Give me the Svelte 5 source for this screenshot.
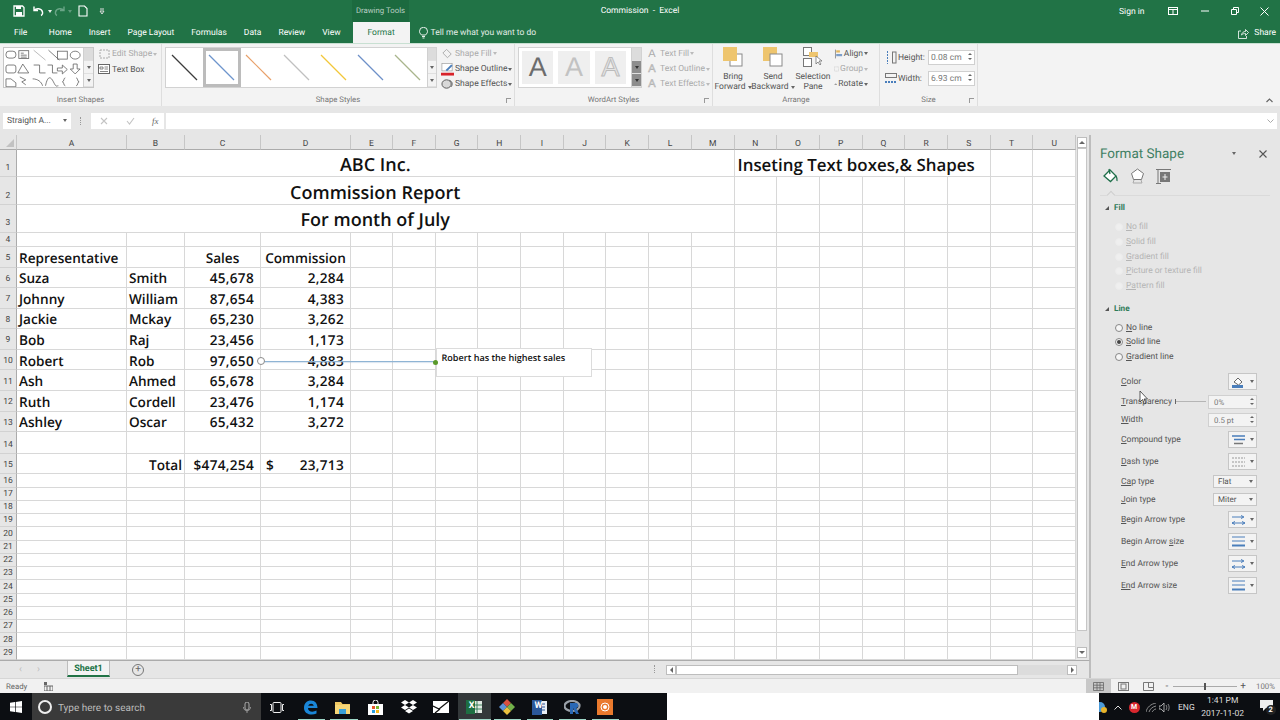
<script lang="ts">
  const tabs = ["Home", "Insert", "Page Layout", "Formulas", "Data", "Review", "View"];
  const colNames = "ABCDEFGHIJKLMNOPQRSTU".split("");

  const sheetData: Record<number, Record<string, string>> = {
    5: { A: "Representative", C: "Sales", D: "Commission" },
    6: { A: "Suza", B: "Smith", C: "45,678", D: "2,284" },
    7: { A: "Johnny", B: "William", C: "87,654", D: "4,383" },
    8: { A: "Jackie", B: "Mckay", C: "65,230", D: "3,262" },
    9: { A: "Bob", B: "Raj", C: "23,456", D: "1,173" },
    10: { A: "Robert", B: "Rob", C: "97,650", D: "4,883" },
    11: { A: "Ash", B: "Ahmed", C: "65,678", D: "3,284" },
    12: { A: "Ruth", B: "Cordell", C: "23,476", D: "1,174" },
    13: { A: "Ashley", B: "Oscar", C: "65,432", D: "3,272" },
    15: { B: "Total", C: "$474,254", D: "23,713" }
  };
  const titles: Record<number, string> = { 1: "ABC Inc.", 2: "Commission Report", 3: "For month of July" };
  const rowNums = Array.from({ length: 29 }, (_, i) => i + 1);

  function align(row: number, col: string): string {
    if (row === 5 && col !== "A") return "center";
    if (col === "C" || col === "D") return "num";
    if (row === 15 && col === "B") return "total";
    return "";
  }

  const fillOptions = [
    ["N", "o fill"],
    ["S", "olid fill"],
    ["G", "radient fill"],
    ["P", "icture or texture fill"],
    ["Pa", "ttern fill"]
  ];
  const lineOptions = [
    ["N", "o line", false],
    ["S", "olid line", true],
    ["G", "radient line", false]
  ];
  const lineRows = [
    { k: "C", label: "olor", h: "h20", ctl: "color" },
    { k: "T", label: "ransparency", h: "h20", ctl: "spin", value: "0%", slider: true },
    { k: "W", label: "idth", h: "h16", ctl: "spin", value: "0.5 pt" },
    { k: "C", label: "ompound type", h: "h24", ctl: "compound" },
    { k: "D", label: "ash type", h: "h20", ctl: "dash" },
    { k: "Ca", label: "p type", h: "h20", ctl: "select", value: "Flat" },
    { k: "J", label: "oin type", h: "h16", ctl: "select", value: "Miter" },
    { k: "B", label: "egin Arrow type", h: "h24", ctl: "arrow" },
    { k: "Begin Arrow s", label: "ize", h: "h20", ctl: "size" },
    { k: "E", label: "nd Arrow type", h: "h24", ctl: "arrow" },
    { k: "En", label: "d Arrow size", h: "h20", ctl: "size" }
  ];
  const styleLines = ["#3c3c3c", "#6d95cc", "#e8a06a", "#c0c0c0", "#f2c73a", "#6d90c8", "#a9b58c"];
  const underlines = [
    { left: 298, w: 27 }, { left: 330, w: 28 }, { left: 459, w: 32 }, { left: 494, w: 27 },
    { left: 527, w: 26 }, { left: 559, w: 27 }, { left: 592, w: 27 }
  ];
</script>

<div class="app">
  <header class="titlebar">
    <div class="qat">
      <svg width="12" height="12" viewBox="0 0 12 12"><path d="M1 1h8.500L11 2.500V11H1z" fill="none" stroke="#fff" stroke-width="1.300"/><rect x="3" y="1" width="5" height="3" fill="#fff"/><rect x="3" y="7" width="6" height="4" fill="#fff"/></svg>
      <svg class="q-undo" width="12" height="12" viewBox="0 0 12 12"><path d="M2 1.500v4h4M2.300 5.300C4 3 9.500 3 10.500 7c.3 1.500-.5 3-1.500 3.500" fill="none" stroke="#fff" stroke-width="1.400"/></svg>
      <span class="caret white q-c1"></span>
      <svg class="q-redo" width="12" height="12" viewBox="0 0 12 12"><path d="M10 1.500v4H6M9.700 5.300C8 3 2.500 3 1.500 7c-.3 1.500.5 3 1.500 3.500" fill="none" stroke="#6aa587" stroke-width="1.400"/></svg>
      <span class="caret dim q-c2"></span>
      <svg class="q-new" width="10" height="12" viewBox="0 0 10 12"><path d="M1 1h5.500L9 3.500V11H1z" fill="none" stroke="#fff" stroke-width="1.100"/></svg>
      <svg class="q-more" width="6" height="7" viewBox="0 0 6 7"><path d="M1 1h4M1 3h4L3 6z" fill="none" stroke="#ddd" stroke-width="1"/></svg>
    </div>
    <div class="context-tab">Drawing Tools</div>
    <div class="doc-title">Commission&nbsp; -&nbsp; Excel</div>
    <div class="win-controls">
      <span class="signin">Sign in</span>
      <svg class="w-display" width="10" height="8" viewBox="0 0 10 8"><rect x=".5" y=".5" width="9" height="7" fill="none" stroke="#fff"/><path d="M.5 2.500h9M5 2.500v5" stroke="#fff"/></svg>
      <svg class="w-min" width="8" height="2" viewBox="0 0 8 2"><path d="M0 1h8" stroke="#fff"/></svg>
      <svg class="w-max" width="8" height="8" viewBox="0 0 8 8"><path d="M.5 2.500h5v5h-5zM2.500 2.500v-2h5v5h-2" fill="none" stroke="#fff"/></svg>
      <svg class="w-close" width="9" height="9" viewBox="0 0 9 9"><path d="M.5.500l8 8M8.500.500l-8 8" stroke="#fff"/></svg>
    </div>
  </header>

  <nav class="tabbar">
    <span class="tab file">File</span>
    {#each tabs as t}
      <span class="tab">{t}</span>
    {/each}
    <span class="tab active">Format</span>
    <svg class="bulb" width="9" height="12" viewBox="0 0 9 12"><path d="M2.500 8C1 6.500.5 5.500.5 4.300a4 4 0 0 1 8 0C8.500 5.500 8 6.500 6.500 8zM3 9.500h3M3.500 11h2" fill="none" stroke="#fff" stroke-width=".9"/></svg>
    <span class="tell">Tell me what you want to do</span>
    <span class="share">
      <svg width="11" height="11" viewBox="0 0 11 11"><path d="M3 3H.5v7.500h8V8M3.500 7c.5-2.500 2-3.500 4-3.500V1.500l3 3-3 3V5.500c-1.500 0-3 .3-4 1.500z" fill="none" stroke="#fff" stroke-width=".8"/></svg>
      Share
    </span>
  </nav>

  <section class="ribbon">
    <div class="group g-shapes">
      <div class="group-body">
        <div class="shape-gallery">
          <svg width="80" height="39" viewBox="0 0 80 39" fill="none" stroke="#5f5f5f" stroke-width=".8">
            <rect x="2" y="3" width="10" height="7" rx="3"/><rect x="15" y="2.500" width="10" height="8"/><path d="M17 5h3M17 7h6M17 9h6"/><path d="M30 2l12 10" stroke="#aaa"/><path d="M45 2l11 10" /><rect x="54" y="3" width="10" height="8"/><ellipse cx="72" cy="7" rx="5" ry="4"/>
            <rect x="2" y="17" width="10" height="8" rx="2"/><path d="M19 16l6 9H14z"/><path d="M30 17h6v8h6"/><path d="M44 17h5v8h5"/><path d="M54 20h5v-3l5 4.500-5 4.500v-3h-5z"/><path d="M70 16h4v5h3l-5 5-5-5h3z"/>
            <path d="M2 31h5l5 4v4H2z"/><path d="M16 29l6 3-4 2 4 3" /><path d="M29 31c5 0 9 3 10 7"/><path d="M42 38c2-10 5-10 8-4s3 4 5 4"/><path d="M62 30c-2 0-1 4-3 4 2 0 1 4 3 4"/><path d="M73 30c2 0 1 4 3 4-2 0-1 4-3 4"/>
          </svg>
          <div class="gallery-scroll">
            <span class="sc up disabled"></span><span class="sc"><span class="caret"></span></span><span class="sc"><span class="caret"></span></span>
          </div>
        </div>
        <div class="cmd-col compact">
          <div class="cmd off">
            <svg width="13" height="12" viewBox="0 0 13 12"><rect x="2" y="2" width="9" height="8" fill="none" stroke="#aaa" stroke-dasharray="2 1"/></svg>
            Edit Shape <span class="caret dimgrey"></span>
          </div>
          <div class="cmd">
            <svg width="13" height="11" viewBox="0 0 13 11"><rect x=".5" y=".5" width="11" height="9" fill="#fff" stroke="#666"/><path d="M2 3h3v2H2zM6.500 3H10M6.500 5H10M2 7.500h8" stroke="#666" fill="none" stroke-width=".8"/></svg>
            Text Box
          </div>
        </div>
      </div>
      <div class="group-label">Insert Shapes</div>
    </div>

    <div class="group g-styles">
      <div class="group-body">
        <div class="style-gallery">
          {#each styleLines as color, i}
            <div class="style-cell" class:selected={i === 1}>
              <svg width="28" height="27" viewBox="0 0 28 27"><path d="M1 1l25 25" stroke={color} stroke-width="1.200"/></svg>
            </div>
          {/each}
          <div class="gallery-scroll tall">
            <span class="sc disabled"></span><span class="sc"><span class="caret"></span></span><span class="sc"><span class="caret"></span></span>
          </div>
        </div>
        <div class="cmd-col">
          <div class="cmd off">
            <svg width="13" height="12" viewBox="0 0 14 12"><path d="M6 1l5 5-4 4-5-5z" fill="none" stroke="#aaa"/></svg>
            Shape Fill <span class="caret dimgrey"></span>
          </div>
          <div class="cmd">
            <svg width="13" height="13" viewBox="0 0 14 13"><rect x="1" y="0" width="11" height="8" fill="#fff" stroke="#999" stroke-width=".7"/><path d="M5 7l6-6 1.500 1.500-6 6z" fill="#4a7ebb"/><rect y="10" width="14" height="3" fill="#d8232a"/></svg>
            Shape Outline <span class="caret"></span>
          </div>
          <div class="cmd">
            <svg width="13" height="12" viewBox="0 0 14 12"><ellipse cx="6" cy="6" rx="5" ry="4.500" fill="#d8d8d8" stroke="#555"/><path d="M9 2c3 1 4 4 2 7" fill="none" stroke="#555"/></svg>
            Shape Effects <span class="caret"></span>
          </div>
        </div>
      </div>
      <div class="group-label">Shape Styles</div>
      <span class="launcher"></span>
    </div>

    <div class="group g-wordart">
      <div class="group-body">
        <div class="wa-gallery">
          <div class="wa-cell dark">A</div>
          <div class="wa-cell light">A</div>
          <div class="wa-cell outline">A</div>
          <div class="gallery-scroll wa">
            <span class="sc disabled"></span><span class="sc dark"><span class="caret"></span></span><span class="sc dark"><span class="caret"></span></span>
          </div>
        </div>
        <div class="cmd-col off-col">
          <div class="cmd off"><span class="wa-a">A</span> Text Fill <span class="caret dimgrey"></span></div>
          <div class="cmd off"><span class="wa-a o">A</span> Text Outline <span class="caret dimgrey"></span></div>
          <div class="cmd off"><span class="wa-a o">A</span> Text Effects <span class="caret dimgrey"></span></div>
        </div>
      </div>
      <div class="group-label">WordArt Styles</div>
      <span class="launcher"></span>
    </div>

    <div class="group g-arrange">
      <div class="group-body">
        <div class="big-cmd b1">
          <svg width="20" height="20" viewBox="0 0 20 20"><rect x="7" y="7" width="12" height="12" fill="#fff" stroke="#8a8a8a"/><rect x="0" y="0" width="14" height="14" fill="#eec56e"/></svg>
          <span>Bring<br/>Forward <i class="caret"></i></span>
        </div>
        <div class="big-cmd b2">
          <svg width="20" height="20" viewBox="0 0 20 20"><rect x="0" y="0" width="14" height="14" fill="#eec56e"/><rect x="7" y="7" width="12" height="12" fill="#fff" stroke="#8a8a8a"/></svg>
          <span>Send<br/>Backward <i class="caret"></i></span>
        </div>
        <div class="big-cmd b3">
          <svg width="20" height="20" viewBox="0 0 20 20"><rect x=".5" y=".5" width="8" height="8" fill="#fff" stroke="#777"/><rect x=".5" y="11.500" width="8" height="8" fill="#fff" stroke="#777"/><rect x="6" y="5" width="9" height="5" fill="#eec56e"/><path d="M13 9v8l2-2 2 3 1-1-2-3h3z" fill="#fff" stroke="#666" stroke-width=".7"/></svg>
          <span>Selection<br/>Pane</span>
        </div>
        <div class="cmd-col small">
          <div class="cmd"><svg width="12" height="12" viewBox="0 0 12 12"><path d="M2 0v12" stroke="#777"/><rect x="3" y="1" width="5" height="3" fill="#e5b75c"/><rect x="3" y="6" width="8" height="3" fill="#7c9ec9"/></svg> Align <span class="caret"></span></div>
          <div class="cmd off"><svg width="12" height="12" viewBox="0 0 12 12"><rect x="1" y="1" width="10" height="10" fill="none" stroke="#b5b5b5" stroke-dasharray="2 1"/></svg> Group <span class="caret dimgrey"></span></div>
          <div class="cmd"><svg width="12" height="12" viewBox="0 0 12 12"><path d="M1 10l5-7v7zM7 10V3l4 7z" fill="#7b7b7b"/></svg> Rotate <span class="caret"></span></div>
        </div>
      </div>
      <div class="group-label">Arrange</div>
    </div>

    <div class="group g-size">
      <div class="group-body size-body">
        <div class="size-row">
          <svg width="12" height="13" viewBox="0 0 12 13"><path d="M2.500 0v13" stroke="#4a7ebb" stroke-dasharray="2 1"/><rect x="7.500" y="1" width="3.500" height="11" fill="none" stroke="#777"/></svg>
          <span>Height:</span>
          <div class="spin-box wide">0.08 cm<span class="spin"><i></i><i class="d"></i></span></div>
        </div>
        <div class="size-row">
          <svg width="12" height="13" viewBox="0 0 12 13"><rect x=".5" y="1.500" width="11" height="4" fill="none" stroke="#777"/><path d="M0 10h12" stroke="#4a7ebb" stroke-dasharray="2 1" stroke-width="2"/></svg>
          <span>Width:</span>
          <div class="spin-box wide">6.93 cm<span class="spin"><i></i><i class="d"></i></span></div>
        </div>
      </div>
      <div class="group-label">Size</div>
      <span class="launcher"></span>
    </div>

    <svg class="collapse" width="7" height="5" viewBox="0 0 7 5"><path d="M.5 4l3-3 3 3" fill="none" stroke="#666" stroke-width="1.200"/></svg>
  </section>

  <section class="formula-bar">
    <div class="name-box">Straight A... <span class="caret"></span></div>
    <span class="grip"></span>
    <div class="fx-buttons">
      <svg width="8" height="8" viewBox="0 0 8 8"><path d="M1 1l6 6M7 1L1 7" stroke="#c4c4c4" stroke-width="1.100"/></svg>
      <svg width="9" height="8" viewBox="0 0 9 8"><path d="M1 4l2.500 3L8 1" fill="none" stroke="#c4c4c4" stroke-width="1.100"/></svg>
      <span class="fx">fx</span>
    </div>
    <div class="fx-input"><svg width="7" height="4" viewBox="0 0 7 4"><path d="M.5.500l3 3 3-3" fill="none" stroke="#aaa"/></svg></div>
  </section>

  <div class="workspace">
    <div class="sheet-area">
      <div class="sheet-row">
        <div class="grid">
          <div class="corner"><span></span></div>
          {#each colNames as c}
            <div class="col-head">{c}</div>
          {/each}

          {#each rowNums as r}
            <div class="row-head" class:tall={r <= 15 && r !== 4}>{r}</div>
            {#if titles[r]}
              <div class="cell title-cell">{titles[r]}</div>
              {#if r === 1}
                <div class="cell note-cell">Inseting Text boxes,&amp; Shapes</div>
                {#each colNames.slice(19) as c}<div class="cell"></div>{/each}
              {:else}
                {#each colNames.slice(13) as c}<div class="cell"></div>{/each}
              {/if}
            {:else}
              {#each colNames as c}
                <div class="cell data {align(r, c)}">
                  {#if r === 15 && c === "D"}
                    <span class="dollar">$</span>
                  {/if}
                  <span>{sheetData[r]?.[c] ?? ""}</span>
                </div>
              {/each}
            {/if}
          {/each}

          <!-- selected connector + text box float above the cells -->
          <div class="connector"></div>
          <span class="handle start"></span>
          <div class="textbox">Robert has the highest sales</div>
          <span class="handle end"></span>
        </div>

        <div class="vscroll">
          <span class="arrow-btn"><i class="tri up"></i></span>
          <span class="v-thumb"></span>
          <span class="arrow-btn"><i class="tri"></i></span>
        </div>
      </div>

      <div class="sheet-tabs">
        <span class="nav-l">‹</span><span class="nav-r">›</span>
        <span class="sheet-tab">Sheet1</span>
        <span class="add-sheet">+</span>
        <span class="grip h"></span>
        <div class="hscroll">
          <span class="arrow-btn"><i class="tri left"></i></span>
          <span class="h-thumb"></span>
          <span class="h-track"></span>
          <span class="arrow-btn"><i class="tri right"></i></span>
        </div>
      </div>
    </div>

    <aside class="pane">
      <div class="pane-head">
        <span class="pane-title">Format Shape</span>
        <span class="caret pane-caret"></span>
        <svg class="pane-close" width="8" height="8" viewBox="0 0 8 8"><path d="M.5.500l7 7M7.500.500l-7 7" stroke="#555" stroke-width="1.100"/></svg>
      </div>
      <div class="pane-icons">
        <svg width="16" height="16" viewBox="0 0 16 16"><path d="M1 8l6-6 6 6-5.500 5.500z" fill="#fff" stroke="#1f6f4a" stroke-width="1.300"/><path d="M6 1l1 5M13 8c1 1.500 1.500 3 1 5" fill="none" stroke="#1f6f4a" stroke-width="1.300"/></svg>
        <svg width="15" height="16" viewBox="0 0 15 16"><path d="M7.500 1l6 4.500-2 6h-8l-2-6z" fill="#fff" stroke="#777"/><path d="M4 12l-1 3h9l-1-3" fill="none" stroke="#aaa"/></svg>
        <svg width="15" height="15" viewBox="0 0 15 15"><path d="M0 .5h15M0 14.500h5" stroke="#777"/><path d="M2 1v13" stroke="#777"/><rect x="4" y="3" width="10" height="10" fill="#777"/><path d="M9 5v6M6.500 8h5" stroke="#eee"/></svg>
      </div>
      <div class="pane-rule"><span class="notch"></span></div>

      <div class="section-head first"><i class="expand"></i>Fill</div>
      <div class="options disabled">
        {#each fillOptions as [k, rest]}
          <div class="option"><span class="radio"></span><span><u>{k}</u>{rest}</span></div>
        {/each}
      </div>

      <div class="section-head line-head"><i class="expand"></i>Line</div>
      <div class="options line-options">
        {#each lineOptions as [k, rest, on]}
          <div class="option"><span class="radio" class:on></span><span><u>{k}</u>{rest}</span></div>
        {/each}
      </div>

      <div class="line-rows">
        {#each lineRows as row}
          <div class="line-row {row.h}">
            <span class="line-label">{#if row.k.length > 2}{row.k.slice(0, -1)}<u>{row.k.slice(-1)}</u>{:else}<u>{row.k}</u>{/if}{row.label}</span>
            {#if row.slider}
              <span class="slider"></span>
            {/if}
            {#if row.ctl === "spin"}
              <div class="spin-box">{row.value}<span class="spin"><i></i><i class="d"></i></span></div>
            {:else if row.ctl === "select"}
              <div class="select-box">{row.value}<span class="caret"></span></div>
            {:else}
              <div class="icon-box">
                {#if row.ctl === "color"}
                  <svg width="13" height="12" viewBox="0 0 13 12"><path d="M2 6l4-4 4 4-3.500 3z" fill="#fff" stroke="#666"/><rect y="9" width="11" height="3" fill="#4a7ebb"/></svg>
                {:else if row.ctl === "compound"}
                  <svg width="13" height="10" viewBox="0 0 13 10"><path d="M0 1h13M2 4.500h11" stroke="#4a7ebb" stroke-width="1.500"/><path d="M2 8.500h9" stroke="#777" stroke-width="1.500"/></svg>
                {:else if row.ctl === "dash"}
                  <svg width="13" height="10" viewBox="0 0 13 10"><path d="M0 1h13M0 5h13M0 9h13" stroke="#999" stroke-dasharray="2 1"/></svg>
                {:else if row.ctl === "arrow"}
                  <svg width="13" height="10" viewBox="0 0 13 10"><path d="M0 2h11M9 .5L12 2 9 3.500M0 8h13M3 6.500L0 8l3 1.500M10 6.500L13 8l-3 1.500" fill="none" stroke="#4a7ebb"/></svg>
                {:else}
                  <svg width="13" height="11" viewBox="0 0 13 11"><path d="M0 1h13M0 5h13" stroke="#4a7ebb"/><path d="M0 9.500h13" stroke="#4a7ebb" stroke-width="2"/></svg>
                {/if}
                <span class="caret"></span>
              </div>
            {/if}
          </div>
        {/each}
      </div>

      <svg class="cursor" width="10" height="15" viewBox="0 0 10 15"><path d="M1 1v11l2.500-2.500L5.500 14l1.500-.7-2-4.300h3.500z" fill="#fff" stroke="#333" stroke-width=".8"/></svg>
    </aside>
  </div>

  <footer class="statusbar">
    <span class="ready">Ready</span>
    <svg class="macro" width="9" height="9" viewBox="0 0 9 9"><rect x="0" y="4" width="9" height="5" fill="none" stroke="#666"/><path d="M3 4v5M6 4v5" stroke="#666"/><rect width="3" height="3" fill="#666"/></svg>
    <div class="views">
      <span class="view on"><svg width="11" height="9" viewBox="0 0 11 9"><path d="M.5.500h10v8H.5zM.5 3.200h10M.5 5.800h10M4 .5v8M7 .5v8" fill="none" stroke="#666" stroke-width=".8"/></svg></span>
      <span class="view"><svg width="11" height="9" viewBox="0 0 11 9"><rect x=".5" y=".5" width="10" height="8" fill="none" stroke="#777"/><rect x="3" y="2" width="5" height="5" fill="none" stroke="#777"/></svg></span>
      <span class="view"><svg width="11" height="9" viewBox="0 0 11 9"><path d="M.5.500h10v8H.5zM5.500.500v5h5" fill="none" stroke="#777"/></svg></span>
    </div>
    <div class="zoom">
      <span class="z-btn">-</span>
      <span class="z-track"><i></i></span>
      <span class="z-btn">+</span>
      <span class="z-val">100%</span>
    </div>
  </footer>

  <footer class="taskbar">
    <div class="start">
      <svg width="12" height="12" viewBox="0 0 12 12" fill="#fff"><path d="M0 1.700l5-.7v4.700H0zM5.700.9L12 0v5.700H5.700zM0 6.300h5V11l-5-.7zM5.700 6.300H12V12l-6.300-.9z"/></svg>
    </div>
    <div class="search">
      <span class="cortana"></span>
      <span class="search-text">Type here to search</span>
      <svg class="mic" width="8" height="11" viewBox="0 0 8 11"><rect x="2" y="0" width="4" height="8" rx="2" fill="none" stroke="#aaa"/><path d="M.5 5c0 5 7 5 7 0M4 9v2" fill="none" stroke="#aaa" stroke-width=".8"/></svg>
    </div>
    <div class="apps">
      <span class="app-icon"><svg width="14" height="11" viewBox="0 0 14 11"><rect x="3" y=".5" width="8" height="10" rx="1" fill="none" stroke="#eee"/><path d="M0 2.500h1.500v6H0M14 2.500h-1.500v6H14" fill="none" stroke="#eee"/></svg></span>
      <span class="app-icon"><svg width="15" height="15" viewBox="0 0 15 15"><path d="M1 8C1 3 4 .5 8 .5c4 0 6.500 3 6.500 7.500H5c0 4 5 4.500 8.500 2.500v3C8 16 1 14 1 8zM5.200 5.800h5.500C10.500 3 6 3 5.200 5.800z" fill="#1a86d8"/></svg></span>
      <span class="app-icon"><svg width="15" height="13" viewBox="0 0 15 13"><path d="M0 1h6l1.500 2H15v10H0z" fill="#f0c863"/><rect x="0" y="4" width="15" height="9" fill="#f7d778"/><rect x="4" y="8" width="7" height="5" fill="#3aa0d8"/></svg></span>
      <span class="app-icon"><svg width="15" height="15" viewBox="0 0 15 15"><path d="M5 4V2.500a2.500 2.500 0 0 1 5 0V4" fill="none" stroke="#fff"/><rect y="4" width="15" height="11" fill="#fff"/><rect x="4" y="6" width="3" height="3" fill="#e8562a"/><rect x="8" y="6" width="3" height="3" fill="#7ab92e"/><rect x="4" y="10" width="3" height="3" fill="#2a9fe0"/><rect x="8" y="10" width="3" height="3" fill="#f5b81c"/></svg></span>
      <span class="app-icon"><svg width="16" height="14" viewBox="0 0 16 14" fill="#fff"><path d="M4 0l4 2.500L4 5 0 2.500zM12 0l4 2.500L12 5 8 2.500zM4 5l4 2.500L4 10 0 7.500zM12 5l4 2.500L12 10 8 7.500zM4 11l4-2.500 4 2.500-4 2.500z"/></svg></span>
      <span class="app-icon"><svg width="16" height="12" viewBox="0 0 16 12"><rect width="16" height="12" fill="#fff"/><path d="M0 5l6 3 10-8M2 12l5-4" fill="none" stroke="#111" stroke-width="1.300"/></svg></span>
      <span class="app-icon active-app"><svg width="16" height="14" viewBox="0 0 16 14"><rect x="7" y="1" width="9" height="12" fill="#dfe8e2"/><path d="M11 1v12M7 5h9M7 9h9" stroke="#1d6f42" stroke-width=".8"/><rect width="9" height="14" fill="#1d6f42"/></svg><b class="xl">X</b></span>
      <span class="app-icon"><svg width="16" height="16" viewBox="0 0 16 16"><path d="M8 0l4 4-4 4-4-4z" fill="#d8503f"/><path d="M4 4l4 4-4 4-4-4z" fill="#5b92d8"/><path d="M12 4l4 4-4 4-4-4z" fill="#73b14a"/><path d="M8 8l4 4-4 4-4-4z" fill="#eac13f"/></svg></span>
      <span class="app-icon"><svg width="15" height="15" viewBox="0 0 15 15"><rect x="6" y="1" width="9" height="13" fill="#e8edf5"/><path d="M8 4h5M8 7h5M8 10h5" stroke="#2b579a"/><rect y="0" width="10" height="15" fill="#2b579a"/></svg><b class="wd">W</b></span>
      <span class="app-icon"><svg width="17" height="14" viewBox="0 0 17 14"><ellipse cx="8" cy="6" rx="7.500" ry="5" fill="none" stroke="#9aa0a8" stroke-width="2.200"/><path d="M6 3h6c3 0 3 5 0 5l3 6h-3l-3-6v6H6z" fill="#2a68b5"/></svg></span>
      <span class="app-icon"><svg width="16" height="16" viewBox="0 0 16 16"><rect width="16" height="16" fill="#ea7a2d"/><circle cx="8" cy="8" r="4" fill="none" stroke="#fff"/><circle cx="8" cy="8" r="2" fill="#fff"/></svg></span>
    </div>
    <div class="gap"></div>
    <div class="tray">
      <svg class="t-first" width="12" height="14" viewBox="0 0 12 14"><circle cx="5" cy="7" r="5" fill="#4b9ad8"/><circle cx="9" cy="10" r="3" fill="#e8b42a"/></svg>
      <svg class="t-up" width="8" height="5" viewBox="0 0 8 5"><path d="M.5 4.500L4 1l3.500 3.500" fill="none" stroke="#ddd"/></svg>
      <span class="mega">M</span>
      <svg class="t-wifi" width="10" height="9" viewBox="0 0 10 9"><path d="M0 9c1-5 5-8 10-9M3 9c1-3 3-5 7-6M6 9c1-1 2-3 4-3" fill="none" stroke="#aaa" stroke-width=".8"/></svg>
      <svg class="t-vol" width="12" height="9" viewBox="0 0 12 9"><path d="M0 3h2l3-3v9L2 6H0z" fill="none" stroke="#ccc" stroke-width=".8"/><path d="M7 2c1 1.500 1 3.500 0 5M9 1c1.500 2 1.500 5 0 7" fill="none" stroke="#aaa" stroke-width=".8"/></svg>
      <span class="eng">ENG</span>
      <span class="clock">1:41 PM<br/>2017-11-02</span>
      <span class="notif"><svg width="13" height="11" viewBox="0 0 13 11"><path d="M0 0h13v8H6l-3 3V8H0z" fill="#eee"/></svg><b>2</b></span>
    </div>
    {#each underlines as u}
      <span class="app-line" style="left:{u.left}px;width:{u.w}px"></span>
    {/each}
  </footer>
</div>

<style>
  :global(body) {
    margin: 0;
    background: #fff;
  }

  .app {
    position: relative;
    width: 1280px;
    height: 720px;
    overflow: hidden;
    display: flex;
    flex-direction: column;
    font-family: Roboto, "Liberation Sans", sans-serif;
    font-size: 8.500px;
    color: #555;
    text-rendering: geometricPrecision;
  }

  .caret {
    display: inline-block;
    width: 0;
    height: 0;
    border-left: 2.500px solid transparent;
    border-right: 2.500px solid transparent;
    border-top: 3px solid #666;
    vertical-align: middle;
  }
  .caret.white { border-top-color: #e8f0ea; }
  .caret.dim { border-top-color: #5f9a7c; }
  .caret.dimgrey { border-top-color: #bbb; }

  /* title bar */
  .titlebar {
    position: relative;
    flex: 0 0 22px;
    display: flex;
    background: #217346;
    color: #fff;
  }
  .qat {
    display: flex;
    align-items: center;
    padding-left: 13px;
    width: 352px;
    box-sizing: border-box;
  }
  .q-undo { margin-left: 7px; }
  .q-c1 { margin-left: 4px; }
  .q-redo { margin-left: 2px; }
  .q-c2 { margin-left: 2px; }
  .q-new { margin-left: 6px; }
  .q-more { margin-left: 11px; }
  .context-tab {
    width: 57px;
    background: #1c6a3f;
    color: #b9cfc3;
    text-align: center;
    line-height: 22px;
    font-size: 7.800px;
    white-space: nowrap;
  }
  .doc-title {
    position: absolute;
    left: 540px;
    width: 200px;
    text-align: center;
    line-height: 22px;
    font-size: 8.500px;
  }
  .win-controls {
    margin-left: auto;
    display: flex;
    align-items: center;
    padding-right: 11px;
  }
  .signin { margin-right: 23px; font-size: 8.500px; padding-top: 1px; }
  .w-min { margin-left: 23px; }
  .w-max { margin-left: 22px; }
  .w-close { margin-left: 21.500px; }

  /* tabs */
  .tabbar {
    flex: 0 0 21px;
    display: flex;
    align-items: center;
    gap: 17px;
    padding-left: 14px;
    background: #217346;
    color: #fff;
    position: relative;
  }
  .tab { white-space: nowrap; line-height: 22px; height: 21px; }
  .tab.file { margin-right: 4.500px; }
  .tab.active {
    margin-left: -5px;
    width: 57px;
    text-align: center;
    background: #f3f3f3;
    color: #217346;
    box-sizing: border-box;
  }
  .bulb { margin-left: -8px; }
  .tell { margin-left: -14px; padding-top: 1px; color: #e4eee8; white-space: nowrap; }
  .share {
    position: absolute;
    right: 4px;
    top: 0;
    line-height: 22px;
    display: flex;
    align-items: center;
    gap: 5px;
  }

  /* ribbon */
  .ribbon {
    position: relative;
    flex: 0 0 63px;
    display: flex;
    background: #f3f3f3;
    border-top: 1px solid #c8e0d2;
    box-sizing: border-box;
  }
  .group {
    position: relative;
    display: flex;
    flex-direction: column;
    border-right: 1px solid #dedede;
    box-sizing: border-box;
  }
  .group-body { flex: 1; display: flex; }
  .group-label {
    height: 13px;
    line-height: 14px;
    text-align: center;
    font-size: 7.800px;
    color: #777;
  }
  .launcher {
    position: absolute;
    right: 3px;
    bottom: 3px;
    width: 4px;
    height: 4px;
    border-left: 1px solid #999;
    border-top: 1px solid #999;
  }
  .g-shapes { width: 162px; }
  .g-styles { width: 353px; }
  .g-wordart { width: 198px; }
  .g-arrange { width: 167px; }
  .g-size { width: 98px; }

  .shape-gallery {
    margin: 3px 0 0 3px;
    width: 91px;
    height: 41px;
    display: flex;
    justify-content: space-between;
    background: #fff;
    border: 1px solid #c6c6c6;
    box-sizing: border-box;
  }
  .gallery-scroll {
    width: 9px;
    display: flex;
    flex-direction: column;
    border-left: 1px solid #d0d0d0;
    background: #f3f3f3;
  }
  .gallery-scroll .sc {
    flex: 1;
    display: flex;
    align-items: center;
    justify-content: center;
    border-bottom: 1px solid #e0e0e0;
  }
  .gallery-scroll .sc.disabled { background: #dcdcdc; }
  .gallery-scroll .sc.dark { background: #8d8d8d; }
  .gallery-scroll .sc.dark .caret { border-top-color: #333; }

  .cmd-col {
    display: flex;
    flex-direction: column;
    justify-content: flex-start;
    gap: 1px;
    margin-left: 4px;
    padding-top: 2.500px;
  }
  .cmd-col.compact { margin-left: 4px; gap: 1px; padding-top: 3px; }
  .cmd {
    height: 14.400px;
    display: flex;
    align-items: center;
    gap: 1px;
    white-space: nowrap;
    color: #555;
  }
  .cmd.off { color: #aaa; }

  .style-gallery {
    margin: 3px 0 0 3px;
    width: 272px;
    height: 41px;
    display: flex;
    background: #fff;
    border: 1px solid #d2d2d2;
    box-sizing: border-box;
  }
  .style-cell {
    width: 37.300px;
    flex: none;
    display: flex;
    align-items: center;
    justify-content: center;
    box-sizing: border-box;
  }
  .style-cell.selected { border: 3px solid #bcbcbc; }
  .gallery-scroll.tall { margin-left: auto; }

  .wa-gallery {
    margin: 3px 0 0 3px;
    width: 124px;
    height: 41px;
    display: flex;
    gap: 5px;
    padding: 3px 0 3px 3px;
    background: #fff;
    border: 1px solid #d2d2d2;
    box-sizing: border-box;
  }
  .wa-cell {
    width: 32px;
    display: flex;
    align-items: center;
    justify-content: center;
    background: #efefef;
    font-size: 27px;
    font-family: "Liberation Sans", sans-serif;
    line-height: 1;
    color: #6c6c6c;
  }
  .wa-cell.light { color: #c2c2c2; }
  .wa-cell.outline {
    color: #e5e5e5;
    -webkit-text-stroke: 1px #bcbcbc;
  }
  .gallery-scroll.wa { margin: -3px 0 -3px auto; }
  .wa-a {
    width: 14px;
    text-align: center;
    font-size: 11px;
    color: #aaa;
    font-family: "Liberation Sans", sans-serif;
  }
  .wa-a.o { color: #ddd; -webkit-text-stroke: .5px #aaa; }
  .off-col { margin-left: 3px; }

  .big-cmd {
    width: 40px;
    display: flex;
    flex-direction: column;
    align-items: center;
    text-align: center;
    line-height: 10.400px;
    white-space: nowrap;
    padding-top: 3px;
  }
  .big-cmd span { margin-top: 5px; display: block; }
  .big-cmd i { display: inline-block; }
  .cmd-col.small { margin-left: 1px; width: 34px; }

  .size-body {
    flex-direction: column;
    gap: 6px;
    padding: 6px 0 0 5px;
  }
  .size-row { display: flex; align-items: center; height: 15px; }
  .size-row span:not(.spin) { width: 30px; margin-left: 1px; padding-top: 1px; }
  .collapse { position: absolute; right: 7px; top: 54px; }

  .spin-box {
    position: relative;
    width: 49px;
    height: 14px;
    line-height: 13px;
    padding-left: 5px;
    background: #fff;
    border: 1px solid #d0d0d0;
    box-sizing: border-box;
    font-size: 7.800px;
    color: #777;
  }
  .spin-box.wide {
    width: 47px;
    height: 15px;
    padding-left: 2px;
    font-size: 8.500px;
    line-height: 15px;
  }
  .spin {
    position: absolute;
    right: 2px;
    top: 2px;
    display: flex;
    flex-direction: column;
    gap: 3px;
  }
  .spin i {
    width: 0;
    height: 0;
    border-left: 2px solid transparent;
    border-right: 2px solid transparent;
    border-bottom: 2.500px solid #666;
  }
  .spin i.d {
    border-bottom: 0;
    border-top: 2.500px solid #666;
  }

  /* formula bar */
  .formula-bar {
    flex: 0 0 29px;
    display: flex;
    align-items: center;
    padding: 0 3px;
    background: #e6e6e6;
    box-sizing: border-box;
  }
  .name-box {
    width: 68px;
    height: 16px;
    display: flex;
    align-items: center;
    justify-content: space-between;
    padding: 0 4px;
    background: #fff;
    box-sizing: border-box;
    color: #555;
  }
  .grip {
    width: 1px;
    height: 8px;
    margin: 0 9px 0 9px;
    border-left: 1px dotted #999;
  }
  .fx-buttons {
    width: 73px;
    height: 16px;
    display: flex;
    align-items: center;
    gap: 18px;
    padding-left: 9px;
    background: #fff;
    box-sizing: border-box;
  }
  .fx {
    font-family: "Liberation Serif", serif;
    font-style: italic;
    font-size: 9px;
    color: #666;
    margin-left: -1px;
  }
  .fx-input {
    flex: 1;
    height: 16px;
    margin-left: 2px;
    display: flex;
    align-items: center;
    justify-content: flex-end;
    padding-right: 3px;
    background: #fff;
    box-sizing: border-box;
  }

  /* sheet */
  .workspace { flex: 0 0 543px; display: flex; }
  .sheet-area { width: 1090px; display: flex; flex-direction: column; }
  .sheet-row { flex: 0 0 525px; display: flex; }
  .grid {
    position: relative;
    display: grid;
    grid-template-columns: 17px 110px 58px 76px 90px 42px repeat(16, 42.690px);
    grid-template-rows: 15px 27px 28px 27.500px 14px 21px repeat(8, 20.600px) 22px 20px repeat(14, 13.250px);
    width: 1076px;
    height: 525px;
    background: #fff;
    overflow: hidden;
  }
  .corner {
    background: #e6e6e6;
    border-right: 1px solid #c6c6c6;
    border-bottom: 1px solid #ababab;
    position: relative;
    box-sizing: border-box;
  }
  .corner span {
    position: absolute;
    right: 2px;
    bottom: 2px;
    width: 0;
    height: 0;
    border-left: 8px solid transparent;
    border-bottom: 8px solid #c2c2c2;
  }
  .col-head {
    background: #e6e6e6;
    border-right: 1px solid #c6c6c6;
    border-bottom: 1px solid #ababab;
    box-sizing: border-box;
    text-align: center;
    line-height: 18px;
    font-size: 8.500px;
    color: #444;
    min-width: 0;
    overflow: hidden;
  }
  .row-head {
    background: #e6e6e6;
    border-right: 1px solid #ababab;
    border-bottom: 1px solid #d2d2d2;
    box-sizing: border-box;
    display: flex;
    align-items: flex-end;
    justify-content: center;
    font-size: 8.500px;
    line-height: 12px;
    color: #444;
    min-height: 0;
  }
  .row-head.tall { padding-bottom: 2.500px; }
  .cell {
    border-right: 1px solid #d8d8d8;
    border-bottom: 1px solid #d8d8d8;
    box-sizing: border-box;
    min-width: 0;
    min-height: 0;
    white-space: nowrap;
    font-family: "Open Sans", sans-serif;
    color: #111;
    font-weight: 600;
  }
  .title-cell {
    grid-column: span 13;
    display: flex;
    align-items: center;
    justify-content: center;
    padding-top: 4px;
    font-size: 18px;
    border-right: 1px solid #d8d8d8;
  }
  .note-cell {
    grid-column: span 6;
    display: flex;
    align-items: center;
    padding: 3px 0 0 3px;
    font-size: 16.900px;
  }
  .data {
    display: flex;
    align-items: center;
    padding: 1px 0 0 2px;
    font-size: 13.600px;
    overflow: visible;
  }
  .data.num {
    justify-content: flex-end;
    padding-right: 6px;
    padding-left: 5px;
    letter-spacing: .3px;
  }
  .data.num .dollar { margin-right: auto; }
  .data.center { justify-content: center; padding: 1px 0 0; letter-spacing: 0; }
  .data.total { justify-content: flex-end; padding-right: 2px; }

  .connector {
    position: absolute;
    left: 262px;
    top: 225.500px;
    width: 173px;
    height: 1px;
    background: #8fb4d4;
    box-shadow: 0 1px 1px rgba(150, 180, 210, .4);
  }
  .handle {
    position: absolute;
    border-radius: 50%;
    box-sizing: border-box;
  }
  .handle.start {
    left: 257px;
    top: 222px;
    width: 8px;
    height: 8px;
    background: #fff;
    border: 1px solid #8a8a8a;
  }
  .handle.end {
    left: 433px;
    top: 225px;
    width: 5px;
    height: 5px;
    background: #5a9a2a;
  }
  .textbox {
    position: absolute;
    left: 435.500px;
    top: 213px;
    width: 156px;
    height: 29px;
    padding: 3px 0 0 5px;
    box-sizing: border-box;
    background: #fff;
    border: 1px solid #dcdcdc;
    font-family: "Open Sans", sans-serif;
    font-size: 9.100px;
    line-height: 12px;
    font-weight: 600;
    color: #111;
    white-space: nowrap;
  }

  .arrow-btn {
    display: flex;
    align-items: center;
    justify-content: center;
    background: #fff;
    border: 1px solid #bdbdbd;
    box-sizing: border-box;
    flex: none;
  }
  .tri {
    width: 0;
    height: 0;
    border-left: 3px solid transparent;
    border-right: 3px solid transparent;
    border-top: 3.500px solid #666;
  }
  .tri.up { border-top: 0; border-bottom: 3.500px solid #666; }
  .tri.left {
    border: 0;
    border-top: 3px solid transparent;
    border-bottom: 3px solid transparent;
    border-right: 3.500px solid #666;
  }
  .tri.right {
    border: 0;
    border-top: 3px solid transparent;
    border-bottom: 3px solid transparent;
    border-left: 3.500px solid #666;
  }
  .vscroll {
    width: 14px;
    display: flex;
    flex-direction: column;
    padding: 2px 2px 0 1px;
    box-sizing: border-box;
    background: #e6e6e6;
    border-right: 1px solid #bdbdbd;
  }
  .vscroll .arrow-btn { height: 11px; }
  .v-thumb {
    height: 483px;
    background: #fff;
    border: 1px solid #c6c6c6;
    box-sizing: border-box;
    margin-bottom: 16px;
  }
  .sheet-tabs {
    flex: 1;
    display: flex;
    align-items: flex-start;
    position: relative;
    background: #e6e6e6;
    border-top: 1px solid #ababab;
    border-right: 1px solid #bdbdbd;
    box-sizing: border-box;
    color: #bbb;
  }
  .nav-l { margin-left: 19px; line-height: 17px; font-size: 10px; }
  .nav-r { margin-left: 15px; line-height: 17px; font-size: 10px; }
  .sheet-tab {
    margin-left: 27px;
    width: 43px;
    height: 16px;
    line-height: 16px;
    text-align: center;
    border: 1px solid #bdbdbd;
    border-top: 0;
    border-bottom: 2px solid #217346;
    box-sizing: border-box;
    color: #217346;
    font-weight: 700;
    font-size: 9px;
    background: #f3f3f3;
  }
  .add-sheet {
    margin: 3px 0 0 22px;
    width: 10px;
    height: 10px;
    border: 1px solid #777;
    border-radius: 50%;
    color: #666;
    text-align: center;
    line-height: 9px;
    font-size: 10px;
  }
  .grip.h { position: absolute; left: 654px; top: 4px; margin: 0; }
  .hscroll {
    position: absolute;
    left: 666px;
    top: 4px;
    width: 411px;
    height: 10px;
    display: flex;
    background: #dcdcdc;
  }
  .hscroll .arrow-btn { width: 10px; }
  .h-thumb {
    width: 342px;
    background: #fff;
    border: 1px solid #bdbdbd;
    box-sizing: border-box;
  }
  .h-track { flex: 1; }

  /* format pane */
  .pane {
    position: relative;
    width: 190px;
    background: #e6e6e6;
    border-left: 1px solid #bdbdbd;
    box-sizing: border-box;
  }
  .pane-head {
    height: 32px;
    display: flex;
    align-items: center;
    padding: 5px 13px 0 9px;
    box-sizing: border-box;
  }
  .pane-title {
    font-size: 13.500px;
    color: #3f7f63;
    white-space: nowrap;
  }
  .pane-caret { margin-left: auto; margin-right: 23px; }
  .pane-icons {
    display: flex;
    align-items: center;
    gap: 11px;
    padding-left: 12px;
    height: 18px;
  }
  .pane-rule {
    position: relative;
    margin: 10px 10px 0 9px;
    height: 1px;
    background: #dadada;
  }
  .notch {
    position: absolute;
    left: 8px;
    top: -3px;
    width: 5px;
    height: 5px;
    transform: rotate(45deg);
    background: #e6e6e6;
    border-left: 1px solid #cfcfcf;
    border-top: 1px solid #cfcfcf;
  }
  .section-head {
    display: flex;
    align-items: center;
    height: 12px;
    padding-left: 14px;
    font-size: 8.200px;
    font-weight: 700;
    color: #2f7a58;
  }
  .section-head.first { margin-top: 6px; }
  .expand {
    width: 0;
    height: 0;
    margin-right: 5px;
    border-left: 4px solid transparent;
    border-bottom: 4px solid #555;
  }
  .options { margin-top: 6px; padding-left: 24px; }
  .options.disabled { color: #b5b5b5; }
  .options.line-options { margin-top: 5px; }
  .line-head { margin-top: 10px; }
  .option {
    display: flex;
    align-items: center;
    gap: 3px;
    height: 14.700px;
    font-size: 8.500px;
  }
  .option .radio { flex: none; }
  .radio {
    width: 8px;
    height: 8px;
    border: 1px solid #888;
    border-radius: 50%;
    background: #f6f6f6;
    box-sizing: border-box;
    position: relative;
  }
  .options.disabled .radio { border-color: #ececec; background: #efefef; }
  .radio.on::after {
    content: "";
    position: absolute;
    inset: 1px;
    border-radius: 50%;
    background: #444;
  }
  .line-rows { margin-top: 7px; padding: 0 23px 0 30px; }
  .line-row {
    display: flex;
    align-items: center;
    justify-content: flex-end;
    position: relative;
  }
  .h16 { height: 16px; }
  .h20 { height: 20px; }
  .h24 { height: 24px; }
  .line-label {
    margin-right: auto;
    font-size: 8.500px;
    white-space: nowrap;
  }
  .slider {
    position: absolute;
    left: 54px;
    top: 9.500px;
    width: 31px;
    height: 1px;
    background: #b5b5b5;
  }
  .slider::before {
    content: "";
    position: absolute;
    left: 0;
    top: -2px;
    width: 1px;
    height: 5px;
    background: #666;
  }
  .icon-box {
    width: 29px;
    height: 17px;
    display: flex;
    align-items: center;
    justify-content: center;
    gap: 5px;
    background: #f3f3f3;
    border: 1px solid #c6c6c6;
    box-sizing: border-box;
  }
  .select-box {
    width: 44px;
    height: 13px;
    display: flex;
    align-items: center;
    justify-content: space-between;
    padding: 0 3px 0 4px;
    background: #f3f3f3;
    border: 1px solid #c6c6c6;
    box-sizing: border-box;
    font-size: 8px;
  }
  .line-row .spin-box { background: #f3f3f3; }
  .cursor { position: absolute; left: 48px; top: 255px; }

  /* status bar */
  .statusbar {
    flex: 0 0 15px;
    display: flex;
    align-items: center;
    padding-left: 6px;
    background: #f1f1f1;
    border-top: 1px solid #d6d6d6;
    box-sizing: border-box;
    color: #666;
    font-size: 7.800px;
  }
  .macro { margin-left: 17px; }
  .views {
    margin-left: auto;
    display: flex;
    height: 100%;
  }
  .view {
    width: 25px;
    display: flex;
    align-items: center;
    justify-content: center;
  }
  .view.on { background: #c8c8c8; }
  .zoom {
    width: 115px;
    display: flex;
    align-items: center;
    margin-right: 4px;
    padding-left: 2px;
    box-sizing: border-box;
  }
  .z-btn { font-size: 10px; width: 8px; text-align: center; color: #555; }
  .z-track {
    position: relative;
    width: 64px;
    height: 1px;
    margin: 0 2px;
    background: #aaa;
  }
  .z-track i {
    position: absolute;
    left: 31px;
    top: -3px;
    width: 2px;
    height: 7px;
    background: #555;
  }
  .z-val { margin-left: 9px; color: #777; }

  /* taskbar */
  .taskbar {
    position: relative;
    flex: 1;
    display: flex;
    background: #0c0e12;
  }
  .start {
    width: 32px;
    display: flex;
    align-items: center;
    justify-content: center;
  }
  .search {
    width: 229px;
    display: flex;
    align-items: center;
    background: #3a3a3a;
    padding: 0 10px 0 6px;
    box-sizing: border-box;
  }
  .cortana {
    width: 14px;
    height: 14px;
    border: 2px solid #eee;
    border-radius: 50%;
    box-sizing: border-box;
  }
  .search-text {
    margin-left: 6px;
    padding-top: 2px;
    font-size: 10px;
    color: #bdbdbd;
    white-space: nowrap;
  }
  .mic { margin-left: auto; }
  .apps {
    width: 406px;
    display: flex;
    box-sizing: border-box;
  }
  .app-icon {
    position: relative;
    width: 32.800px;
    display: flex;
    align-items: center;
    justify-content: center;
    flex: none;
  }
  .active-app { background: #33383a; }
  .xl, .wd {
    position: absolute;
    left: 11px;
    top: 8px;
    font-size: 9px;
    color: #fff;
    line-height: 11px;
  }
  .gap { width: 432px; background: #fff; }
  .tray {
    flex: 1;
    display: flex;
    align-items: center;
    overflow: hidden;
    color: #ddd;
  }
  .t-first { margin-left: -4px; flex: none; }
  .t-up { margin-left: 7px; flex: none; }
  .mega {
    margin-left: 6.500px;
    width: 11px;
    height: 11px;
    flex: none;
    border-radius: 50%;
    background: #d9272e;
    color: #fff;
    font-size: 7px;
    font-weight: 700;
    line-height: 11px;
    text-align: center;
  }
  .t-wifi { margin-left: 6.500px; flex: none; }
  .t-vol { margin-left: 3px; flex: none; }
  .eng { margin-left: 7px; padding-top: 1px; font-size: 8.500px; }
  .clock {
    width: 46px;
    flex: none;
    margin-left: 5px;
    padding-top: 2px;
    text-align: center;
    font-size: 8.500px;
    line-height: 13px;
    white-space: nowrap;
  }
  .notif { position: relative; margin-left: 14px; flex: none; }
  .notif b {
    position: absolute;
    left: 6px;
    top: 5px;
    width: 10px;
    height: 10px;
    line-height: 10px;
    border-radius: 50%;
    background: #222;
    text-align: center;
    font-size: 7.500px;
    color: #fff;
  }
  .app-line {
    position: absolute;
    bottom: 0;
    height: 2px;
    background: #9fd8c8;
  }
</style>
